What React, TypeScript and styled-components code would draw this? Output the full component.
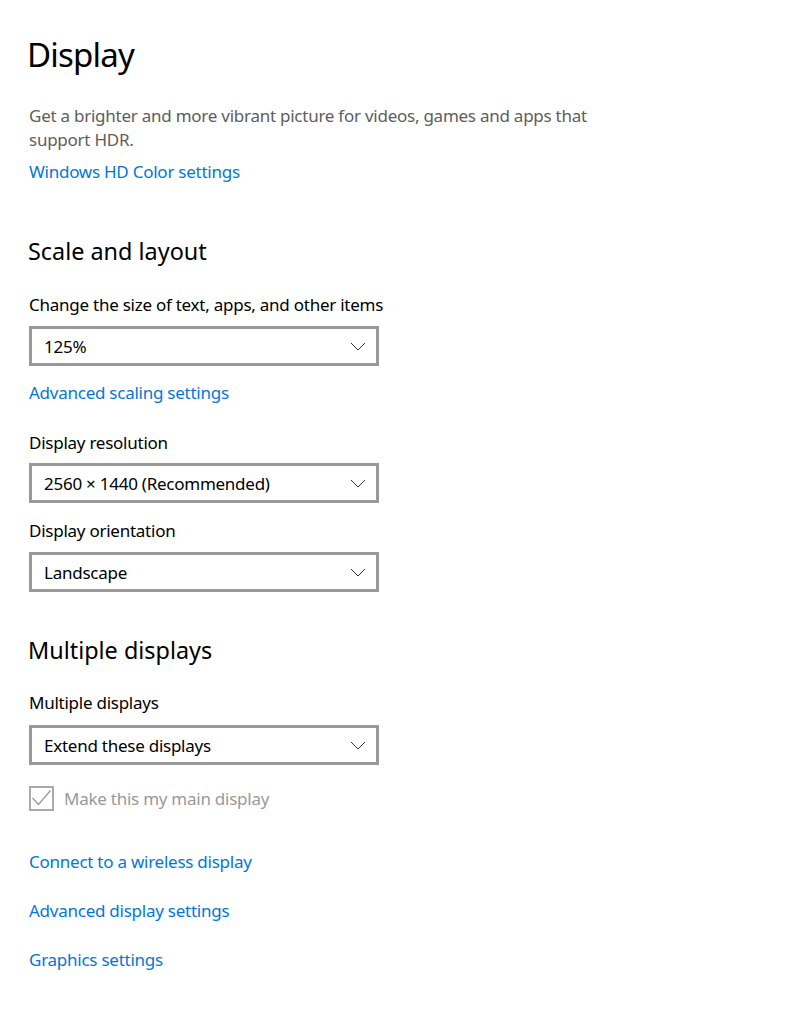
import React from "react";
import styled, { createGlobalStyle } from "styled-components";

const Global = createGlobalStyle`
  html, body { margin: 0; padding: 0; background: #fff; }
  body { font-family: "Noto Sans", "Open Sans", sans-serif; color: #000; }
`;

const Page = styled.div`
  padding: 31px 0 40px 29px;
  display: flex;
  flex-direction: column;
  align-items: flex-start;
`;

const Title = styled.h1`
  margin: 0 0 0 -2px;
  font-size: 33px;
  font-weight: 400;
  line-height: 48px;
  letter-spacing: -0.8px;
`;

const Description = styled.p`
  margin: 25px 0 0;
  width: 600px;
  font-size: 17px;
  letter-spacing: -0.25px;
  line-height: 24px;
  color: #5d5d5d;
`;

const Link = styled.a<{ $top: number }>`
  margin-top: ${(p) => p.$top}px;
  font-size: 17px;
  letter-spacing: -0.25px;
  line-height: 24px;
  color: #0078d7;
  text-decoration: none;
  cursor: pointer;
`;

const SectionTitle = styled.h2<{ $top: number }>`
  margin: ${(p) => p.$top}px 0 0 -1px;
  font-size: 23.4px;
  font-weight: 400;
  line-height: 32px;
`;

const Label = styled.div<{ $top: number }>`
  margin-top: ${(p) => p.$top}px;
  font-size: 17px;
  letter-spacing: -0.25px;
  line-height: 24px;
`;

const Select = styled.div<{ $top: number }>`
  margin-top: ${(p) => p.$top}px;
  box-sizing: border-box;
  width: 350px;
  height: 40px;
  border: 3px solid #999;
  display: flex;
  align-items: center;
  justify-content: space-between;
  padding: 0 10px 0 12px;
  font-size: 17px;
  letter-spacing: -0.25px;
`;

const CheckRow = styled.label`
  margin-top: 21px;
  display: flex;
  align-items: center;
  gap: 10px;
  font-size: 17px;
  letter-spacing: -0.25px;
  color: #999;
`;

const Box = styled.span`
  box-sizing: border-box;
  width: 25px;
  height: 25px;
  border: 2px solid #aaa;
  display: flex;
  align-items: center;
  justify-content: center;
`;

const Chevron = () => (
  <svg width="16" height="9" viewBox="0 0 16 9">
    <path d="M1 1 L8 8 L15 1" fill="none" stroke="#333" strokeWidth="1" />
  </svg>
);

const Dropdown = ({ value, top }: { value: string; top: number }) => (
  <Select $top={top}>
    <span>{value}</span>
    <Chevron />
  </Select>
);

export default function App() {
  return (
    <>
      <Global />
      <Page>
        <Title>Display</Title>
        <Description>
          Get a brighter and more vibrant picture for videos, games and apps that support HDR.
        </Description>
        <Link $top={8}>Windows HD Color settings</Link>

        <SectionTitle $top={51}>Scale and layout</SectionTitle>
        <Label $top={26}>Change the size of text, apps, and other items</Label>
        <Dropdown value="125%" top={9} />
        <Link $top={15}>Advanced scaling settings</Link>

        <Label $top={26}>Display resolution</Label>
        <Dropdown value="2560 × 1440 (Recommended)" top={8} />
        <Label $top={16}>Display orientation</Label>
        <Dropdown value="Landscape" top={9} />

        <SectionTitle $top={42}>Multiple displays</SectionTitle>
        <Label $top={25}>Multiple displays</Label>
        <Dropdown value="Extend these displays" top={10} />
        <CheckRow>
          <Box>
            <svg width="21" height="21" viewBox="0 0 21 21">
              <path d="M1.5 10 L7.5 16.5 L19.5 2.5" fill="none" stroke="#999" strokeWidth="1.2" />
            </svg>
          </Box>
          Make this my main display
        </CheckRow>
        <Link $top={39}>Connect to a wireless display</Link>
        <Link $top={25}>Advanced display settings</Link>
        <Link $top={25}>Graphics settings</Link>
      </Page>
    </>
  );
}
